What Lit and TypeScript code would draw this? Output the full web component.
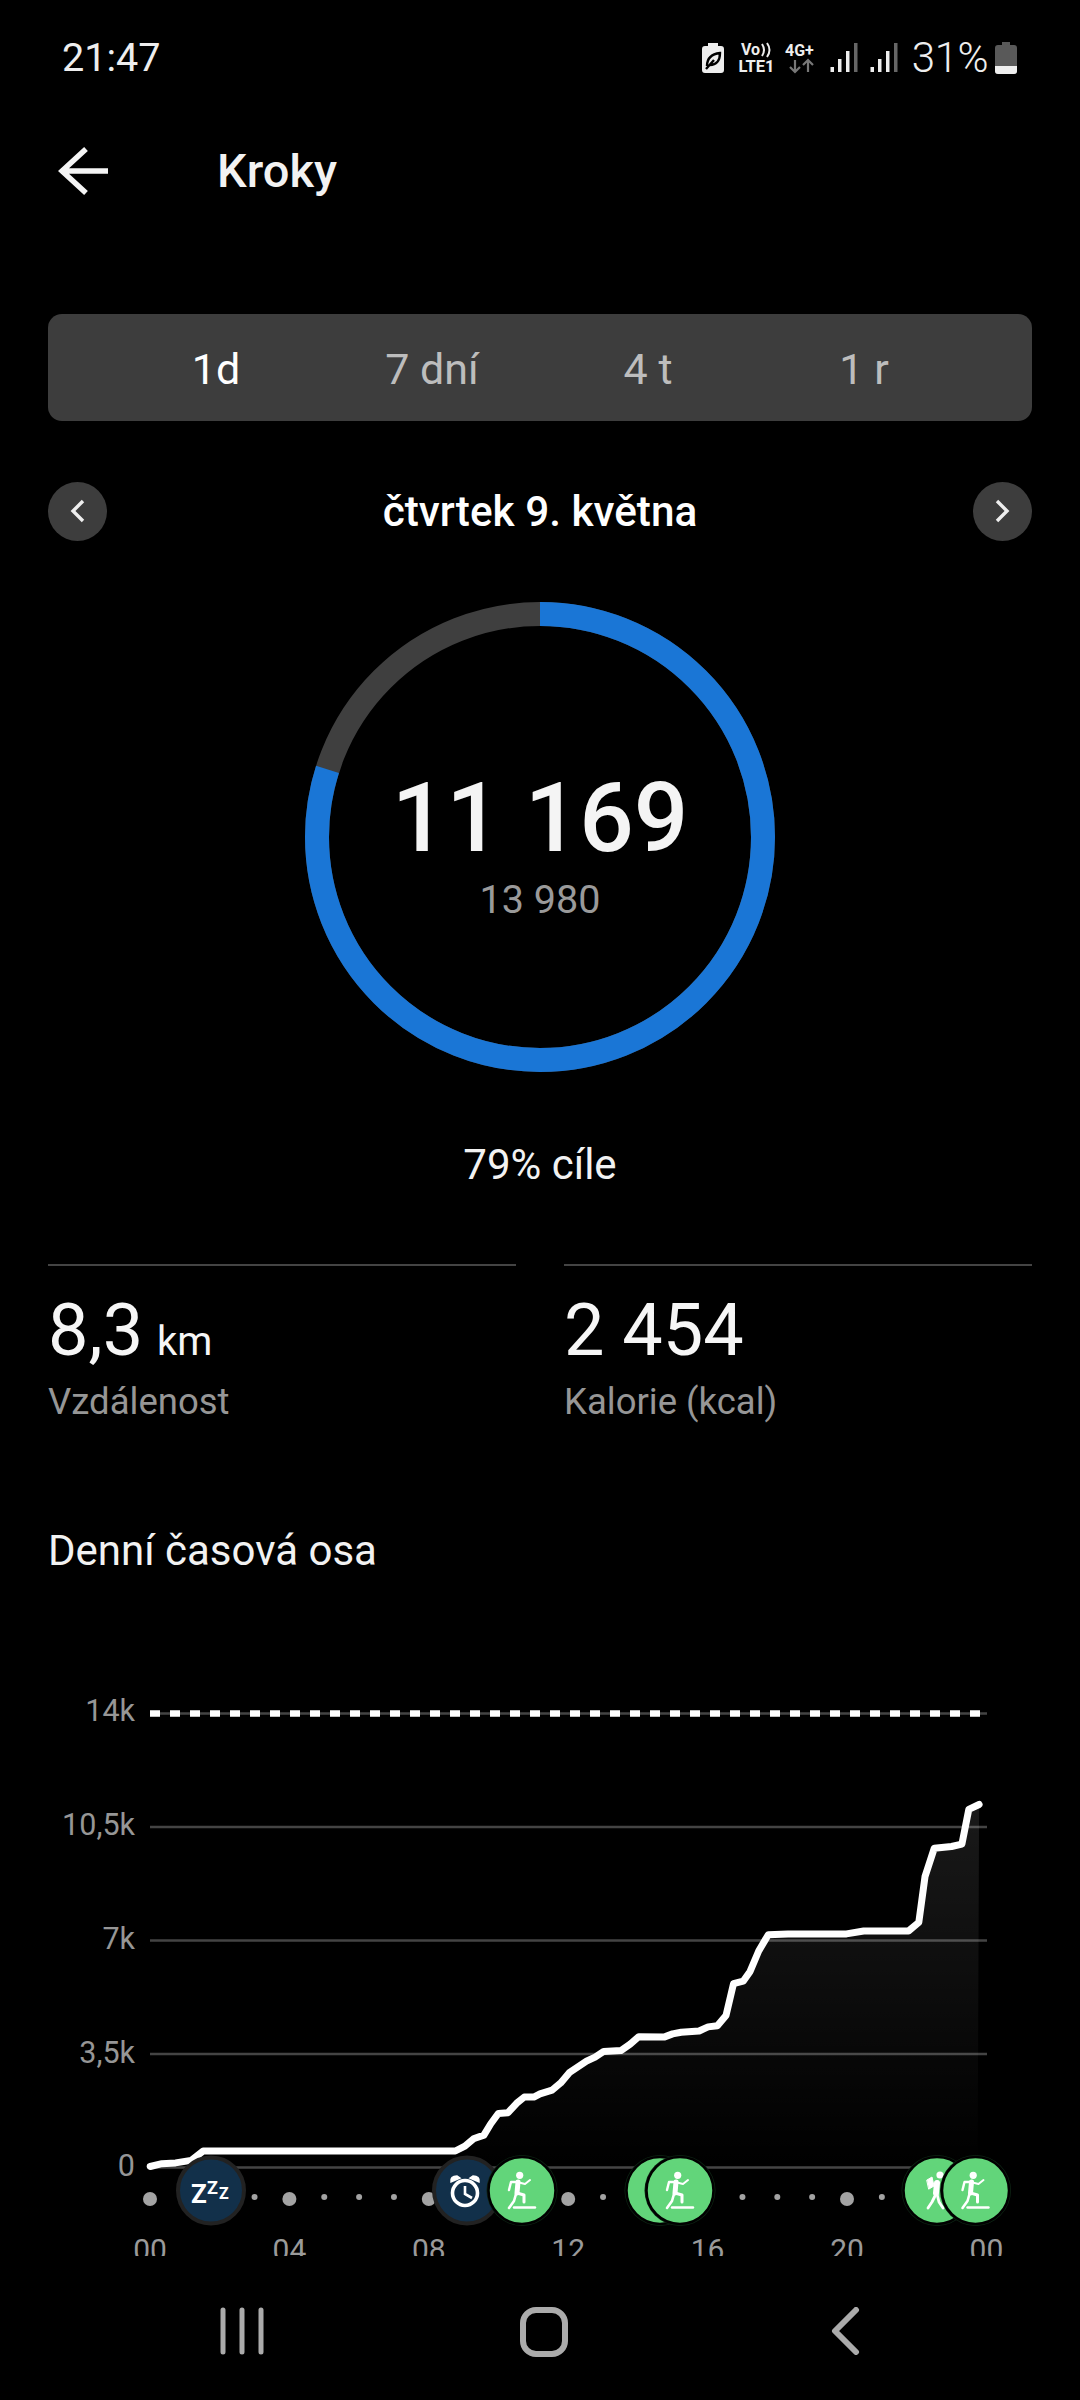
import { LitElement, html, css, svg } from "lit";
import { customElement } from "lit/decorators.js";

const CHART_TOP = 1640;
const left: number[][] = [[436,1290],[470,1283],[510,1281],[555,1275],[590,1252],[1322,1252],[1350,1240],[1375,1222],[1405,1213],[1425,1185],[1447,1160],[1475,1158],[1500,1135],[1522,1120],[1550,1120]];
const right: number[][] = [[0,1112],[35,1103],[60,1085],[85,1060],[135,1032],[160,1022],[185,1008],[235,1006],[262,990],[287,972],[360,973],[385,965],[410,961],[462,958],[488,948],[515,945],[540,920],[562,842],[590,836],[610,812],[635,762],[663,722],[720,720],[890,720],[940,713],[1070,713],[1100,692],[1118,580],[1145,510],[1195,506],[1225,500],[1245,415],[1275,403]];
const scaleX = 540 / 1568;
const scaleY = 640 / 1568;
const pts = [
  ...left.map(([x, y]) => [x * scaleX, y * scaleY]),
  ...right.map(([x, y]) => [540 + x * scaleX, y * scaleY]),
].map(([x, y]) => `${x.toFixed(1)},${y.toFixed(1)}`);
const curve = pts.join(" ");
const area = `${curve} 977.6,${2167 - CHART_TOP} 150,${2167 - CHART_TOP}`;

const yLabels = [
  { t: "14k", y: 1721 },
  { t: "10,5k", y: 1835 },
  { t: "7k", y: 1949 },
  { t: "3,5k", y: 2063 },
  { t: "0", y: 2176 },
];
const grid = [1713.5, 1827, 1940.5, 2054, 2167.5];
const xLabels = ["00", "04", "08", "12", "16", "20", "00"];
const small = [3, 5, 6, 7, 13, 17, 18, 19, 21];
const big = [0, 4, 8, 12, 20];
const hx = (h: number) => 150 + 34.85 * h;

const treadmill = (cx: number, cy: number) => svg`
  <g transform="translate(${cx} ${cy})" fill="none" stroke="#fff" stroke-linecap="round" stroke-linejoin="round">
    <circle cx="-2.3" cy="-14.7" r="3.6" fill="#fff" stroke="none"></circle>
    <path d="M-5-8L3-6L8-10" stroke-width="2"></path>
    <path d="M-4-8L-11-8L-13 0" stroke-width="2.4"></path>
    <path d="M-4-8L-5 3" stroke-width="5"></path>
    <path d="M-5 3L2 5L2 12" stroke-width="3"></path>
    <path d="M-6 4L-8 11L-13 18" stroke-width="2.6"></path>
    <path d="M-8 17.5L13 17.5" stroke-width="2.4"></path>
  </g>`;

const hiker = (cx: number, cy: number) => svg`
  <g transform="translate(${cx} ${cy})" fill="none" stroke="#fff" stroke-linecap="round" stroke-linejoin="round">
    <circle cx="3" cy="-15" r="3.6" fill="#fff" stroke="none"></circle>
    <path d="M-10-10L-5-13L-3-4L-8-1Z" fill="#fff" stroke-width="1"></path>
    <path d="M0-7L-1 3" stroke-width="6"></path>
    <path d="M-1 4L-5 12L-9 18" stroke-width="2.8"></path>
    <path d="M0 4L2 12L6 18" stroke-width="2.8"></path>
  </g>`;

const greenBubble = (cx: number, inner: unknown) => svg`
  <circle cx=${cx} cy="2190.5" r="35.5" fill="#0e2414"></circle>
  <circle cx=${cx} cy="2190.5" r="33.5" fill="#62d57a" stroke="#000" stroke-width="2.5"></circle>
  ${inner}`;

const navyBubble = (cx: number, inner: unknown) => svg`
  <circle cx=${cx} cy="2190.5" r="33" fill="#12304a" stroke="#222" stroke-width="4"></circle>
  ${inner}`;

@customElement("app-root")
export class AppRoot extends LitElement {
  static styles = css`
    :host {
      display: block;
      width: 1080px;
      height: 2400px;
      background: #000;
      color: #fff;
      font-family: Roboto, "Noto Sans", sans-serif;
      overflow: hidden;
    }
    .status {
      height: 115px;
      display: flex;
      align-items: center;
      justify-content: space-between;
      padding: 0 22px 0 62px;
      box-sizing: border-box;
    }
    .time {
      font-size: 39.6px;
      font-weight: 400;
      color: #eee;
    }
    .status-right {
      display: flex;
      align-items: center;
    }
    .status-icons {
      display: block;
    }
    .status-gap {
      width: 8px;
    }
    .pct {
      font-size: 42px;
      font-weight: 300;
      color: #eee;
      margin: 0 7px 0 0;
      letter-spacing: -0.5px;
    }
    .batt {
      display: block;
      margin-right: 41px;
    }
    .header {
      height: 112px;
      display: flex;
      align-items: center;
    }
    .back {
      margin-left: 58px;
      width: 52px;
      height: 50px;
      display: block;
    }
    .title {
      margin: -2px 0 0 107px;
      font-size: 47px;
      font-weight: 500;
      color: #f2f2f2;
    }
    .tabs {
      margin: 87px 48px 0;
      height: 107px;
      background: #3d3d3d;
      border-radius: 14px;
      padding: 2px 60px 0;
      box-sizing: border-box;
      display: grid;
      grid-template-columns: repeat(4, 1fr);
      align-items: center;
      justify-items: center;
      font-size: 43px;
      color: #bdbdbd;
    }
    .tabs .on {
      color: #fff;
    }
    .date {
      margin: 61px 48px 0;
      height: 58px;
      display: flex;
      align-items: center;
      justify-content: space-between;
    }
    .round {
      width: 59px;
      height: 59px;
      border-radius: 50%;
      background: #3d3d3d;
      display: flex;
      align-items: center;
      justify-content: center;
    }
    .date-text {
      font-size: 42.3px;
      font-weight: 500;
    }
    .ring {
      margin-top: 62px;
      display: grid;
      justify-items: center;
      align-items: center;
    }
    .ring > * {
      grid-area: 1 / 1;
    }
    .ring-text {
      display: flex;
      flex-direction: column;
      align-items: center;
      margin-top: 10px;
    }
    .steps {
      font-size: 96px;
      font-weight: 500;
      line-height: 112px;
      color: #f4f4f4;
    }
    .target {
      font-size: 39.5px;
      line-height: 46px;
      margin-top: 3px;
      color: #9a9a9a;
    }
    .goal {
      margin-top: 70px;
      text-align: center;
      font-size: 42px;
      line-height: 46px;
      color: #f2f2f2;
    }
    .stats {
      margin: 76px 48px 0;
      display: grid;
      grid-template-columns: 1fr 1fr;
      gap: 48px;
    }
    .stat {
      border-top: 2px solid #444;
      padding-top: 25px;
    }
    .value {
      font-size: 72px;
      line-height: 80px;
      height: 80px;
      color: #f6f6f6;
    }
    .unit {
      font-size: 40px;
      line-height: 0;
      margin-left: -4px;
    }
    .label {
      margin-top: 9px;
      font-size: 36.5px;
      line-height: 44px;
      color: #969696;
    }
    .section {
      margin: 102px 48px 0;
      font-size: 42px;
      line-height: 50px;
      color: #f2f2f2;
    }
    .chart {
      display: block;
      margin-top: 64px;
    }
    .ylab {
      font-size: 30.5px;
      fill: #969696;
      text-anchor: end;
    }
    .xlab {
      font-size: 30px;
      fill: #9a9a9a;
      text-anchor: middle;
    }
    .zz {
      fill: #fff;
      font-weight: 700;
    }
    .nav {
      height: 144px;
      display: flex;
      justify-content: center;
      padding: 51px 0 0 8px;
      box-sizing: border-box;
    }
    .nav-cell {
      width: 302px;
      display: flex;
      justify-content: center;
    }
  `;

  render() {
    return html`
      <div class="status">
        <span class="time">21:47</span>
        <div class="status-right">
          ${this.statusIcons()}
          <span class="status-gap"></span>
          <span class="pct">31%</span>
          <svg class="batt" width="22" height="32" viewBox="0 0 22 32">
            <path d="M7 0h8v3h4a3 3 0 0 1 3 3v23a3 3 0 0 1-3 3H3a3 3 0 0 1-3-3V6a3 3 0 0 1 3-3h4z" fill="#595959"></path>
            <path d="M0 24h22v5a3 3 0 0 1-3 3H3a3 3 0 0 1-3-3z" fill="#eee"></path>
          </svg>
        </div>
      </div>

      <div class="header">
        <svg class="back" viewBox="0 0 52 50" fill="none" stroke="#f5f5f5" stroke-width="5.5">
          <path d="M3 25H50M28 3L4 25L28 47"></path>
        </svg>
        <div class="title">Kroky</div>
      </div>

      <div class="tabs">
        <span class="on">1d</span><span>7 dní</span><span>4 t</span><span>1 r</span>
      </div>

      <div class="date">
        <div class="round">
          <svg width="16" height="24" viewBox="0 0 16 24" fill="none" stroke="#eee" stroke-width="3.4">
            <path d="M13 2L3 12L13 22"></path>
          </svg>
        </div>
        <span class="date-text">čtvrtek 9. května</span>
        <div class="round">
          <svg width="16" height="24" viewBox="0 0 16 24" fill="none" stroke="#eee" stroke-width="3.4">
            <path d="M3 2L13 12L3 22"></path>
          </svg>
        </div>
      </div>

      <div class="ring">
        <svg width="470" height="470" viewBox="0 0 470 470">
          <circle cx="235" cy="235" r="223" fill="none" stroke="#3f3f3f" stroke-width="24"></circle>
          <circle cx="235" cy="235" r="223" fill="none" stroke="#1a76d6" stroke-width="24"
            pathLength="100" stroke-dasharray="79.9 100" transform="rotate(-90 235 235)"></circle>
        </svg>
        <div class="ring-text">
          <span class="steps">11 169</span>
          <span class="target">13 980</span>
        </div>
      </div>

      <div class="goal">79% cíle</div>

      <div class="stats">
        <div class="stat">
          <div class="value">8,3 <span class="unit">km</span></div>
          <div class="label">Vzdálenost</div>
        </div>
        <div class="stat">
          <div class="value">2 454</div>
          <div class="label">Kalorie (kcal)</div>
        </div>
      </div>

      <div class="section">Denní časová osa</div>

      ${this.chart()}

      <div class="nav">
        <div class="nav-cell">
          <svg width="46" height="48" viewBox="0 0 46 48" stroke="#ababab" stroke-width="5" stroke-linecap="round">
            <path d="M4 3V45M23 3V45M42 3V45"></path>
          </svg>
        </div>
        <div class="nav-cell">
          <svg width="48" height="50" viewBox="0 0 48 50" fill="none" stroke="#ababab" stroke-width="6">
            <rect x="3" y="3" width="42" height="44" rx="13"></rect>
          </svg>
        </div>
        <div class="nav-cell">
          <svg width="30" height="48" viewBox="0 0 30 48" fill="none" stroke="#ababab" stroke-width="6" stroke-linecap="round" stroke-linejoin="round">
            <path d="M25 3L4 24L25 45"></path>
          </svg>
        </div>
      </div>
    `;
  }

  statusIcons() {
    return html`
      <svg class="status-icons" width="202" height="36" viewBox="702 40 202 36">
        <path d="M708 43h10v3h3a3 3 0 0 1 3 3v21a3 3 0 0 1-3 3h-16a3 3 0 0 1-3-3V49a3 3 0 0 1 3-3h3z" fill="#eee"></path>
        <path d="M707 66c0-8 5-12 13-13c0 8-4 12-10 12M706 69l8-9" fill="none" stroke="#000" stroke-width="2.4"></path>
        <text x="741" y="55" font-size="16" font-weight="700" fill="#eee">Vo</text>
        <path d="M762 44q4 6 0 12M767 43q5 7 0 14" fill="none" stroke="#eee" stroke-width="2"></path>
        <text x="738.5" y="72" font-size="16.5" font-weight="700" fill="#eee">LTE1</text>
        <text x="785" y="56" font-size="16" font-weight="700" fill="#eee">4G+</text>
        <path d="M795 60v12M790 67l5 5l5-5M808 72V60M803 65l5-5l5 5" fill="none" stroke="#777" stroke-width="2.2"></path>
        ${[832, 872].map(
          (x) => svg`
            <rect x=${x - 1.5} y="67" width="3.5" height="5" fill="#eee"></rect>
            <rect x=${x + 6} y="59" width="3.5" height="13" fill="#eee"></rect>
            <rect x=${x + 14} y="51" width="3.5" height="21" fill="#eee"></rect>
            <rect x=${x + 22} y="43" width="3.5" height="29" fill="#666"></rect>`
        )}
      </svg>
    `;
  }

  chart() {
    return html`
      <svg class="chart" width="1080" height="616" viewBox="0 1640 1080 616">
        <defs>
          <linearGradient id="fade" x1="0" y1="0" x2="0" y2="1">
            <stop offset="0" stop-color="#fff" stop-opacity="0.1"></stop>
            <stop offset="1" stop-color="#fff" stop-opacity="0"></stop>
          </linearGradient>
        </defs>
        ${grid.map(
          (y) => svg`<line x1="150" x2="987" y1=${y} y2=${y} stroke="#444" stroke-width="2.4"></line>`
        )}
        <line x1="150" x2="982" y1="1713.5" y2="1713.5" stroke="#fff" stroke-width="6.5" stroke-dasharray="10 10"></line>
        ${yLabels.map(
          (l) => svg`<text class="ylab" x="135" y=${l.y}>${l.t}</text>`
        )}
        <g transform="translate(0 1640)">
          <polygon points=${area} fill="url(#fade)"></polygon>
          <polyline points=${curve} fill="none" stroke="#fff" stroke-width="7" stroke-linejoin="round" stroke-linecap="round"></polyline>
        </g>
        ${big.map(
          (h) => svg`<circle cx=${hx(h)} cy="2199" r="7" fill="#a3a3a3"></circle>`
        )}
        ${small.map(
          (h) => svg`<circle cx=${hx(h)} cy="2197" r="3" fill="#a3a3a3"></circle>`
        )}
        ${xLabels.map(
          (t, i) => svg`<text class="xlab" x=${hx(i * 4)} y="2260">${t}</text>`
        )}
        ${navyBubble(
          211,
          svg`
            <text class="zz" x="191" y="2203" font-size="26">Z</text>
            <text class="zz" x="207" y="2194" font-size="18">Z</text>
            <text class="zz" x="219" y="2199" font-size="16">Z</text>`
        )}
        ${navyBubble(
          467,
          svg`
            <circle cx="465" cy="2193" r="12.5" fill="none" stroke="#fff" stroke-width="3.6"></circle>
            <path d="M465 2186V2194L472 2198" fill="none" stroke="#fff" stroke-width="2.6"></path>
            <path d="M451 2182q-1-6 6-6l3 2z" fill="#fff" stroke="#fff" stroke-width="1.5"></path>
            <path d="M479 2182q1-6-6-6l-3 2z" fill="#fff" stroke="#fff" stroke-width="1.5"></path>`
        )}
        ${greenBubble(522, treadmill(522, 2190))}
        ${greenBubble(
          660,
          svg`<path d="M651 2193q-6 6 0 11" fill="none" stroke="#fff" stroke-width="3"></path>`
        )}
        ${greenBubble(680, treadmill(680, 2190))}
        ${greenBubble(937, hiker(937, 2190))}
        ${greenBubble(975.5, treadmill(975.5, 2190))}
      </svg>
    `;
  }
}
